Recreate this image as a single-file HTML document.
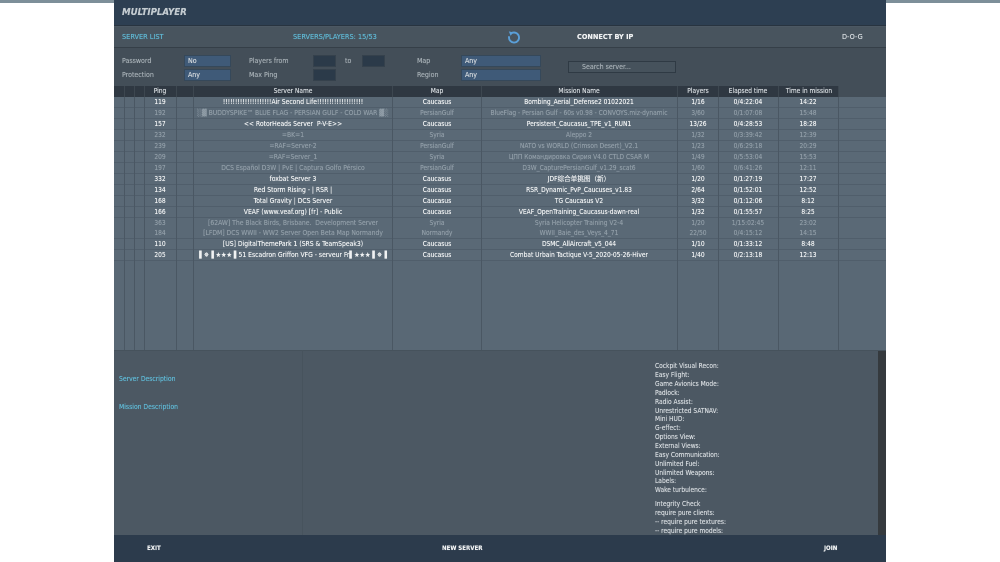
<!DOCTYPE html>
<html><head><meta charset="utf-8"><style>
html,body{margin:0;padding:0;width:1000px;height:562px;overflow:hidden;background:#fff}
body{font-family:"DejaVu Sans Condensed","DejaVu Sans","Noto Sans CJK SC",sans-serif;font-stretch:condensed;font-size:6.6px;color:#d0d6da;position:relative;filter:blur(.25px);text-shadow:0 0 .4px currentColor}
div{position:absolute;box-sizing:border-box;white-space:nowrap}
.c{transform:translateX(-50%)}
.cy{color:#5fb8d4}
.big{font-size:7.3px}
.desc{font-size:6.75px}
.lb{color:#a4adb3;font-size:7px}
.inp{background:#3f5a78;border:1px solid #35485a;height:12px;color:#d5dade;padding-left:3px;line-height:10px;font-size:7px}
.dk{background:#2b3a49;border:1px solid #35414c;height:12px;width:23px}
.r{left:114px;width:772px;height:11px;line-height:10px;border-bottom:1px solid #505e6b;background:#5a6976;color:#f0f2f3}
.r.o{color:#909da7}
.r div{top:0}
.r div:nth-child(2){font-size:6.75px}
.v{width:1px;background:#4a5763;top:97px;height:253px}
.hv{width:1px;background:#3d4750;top:86px;height:11px}
.h{top:86px;line-height:11px;color:#d5dade}
.t{left:655px;color:#d5dade;line-height:9px;margin-top:1px}
.b{font-weight:bold;color:#f0f2f3;line-height:10px}
</style></head><body>
<div style="left:0;top:0;width:1000px;height:3px;background:#7d8f99"></div>
<div style="left:114px;top:0;width:772px;height:562px;background:#4c5863"></div>
<div style="left:114px;top:0;width:772px;height:26px;background:#2d3f52;border-bottom:1px solid #283440"></div>
<div style="left:122px;top:7px;font-size:9.6px;font-weight:bold;font-style:italic;color:#c3cbd0;line-height:12px">MULTIPLAYER</div>
<div style="left:114px;top:27px;width:772px;height:21px;background:#48545e;border-bottom:1px solid #353f48"></div>
<div class="cy big" style="left:122px;top:32px;line-height:10px">SERVER LIST</div>
<div class="cy big" style="left:293px;top:32px;line-height:10px">SERVERS/PLAYERS: 15/53</div>
<svg style="position:absolute;left:507px;top:30px" width="14" height="14" viewBox="0 0 14 14"><path d="M4.2 3.4A5 5 0 1 1 2.2 6.2" fill="none" stroke="#5a9fd8" stroke-width="1.9"/><path d="M1.8 1.4L6.4 2.4 3.6 5.8Z" fill="#5a9fd8"/></svg>
<div class="b big" style="left:577px;top:32px">CONNECT BY IP</div>
<div class="big" style="left:842px;top:32px;line-height:10px;color:#d5dade">D-O-G</div>
<div style="left:114px;top:48px;width:772px;height:38px;background:#434e58"></div>
<div class="lb" style="left:122px;top:56px;line-height:10px">Password</div>
<div class="lb" style="left:122px;top:70px;line-height:10px">Protection</div>
<div class="inp" style="left:184px;top:55px;width:47px">No</div>
<div class="inp" style="left:184px;top:69px;width:47px">Any</div>
<div class="lb" style="left:249px;top:56px;line-height:10px">Players from</div>
<div class="lb" style="left:249px;top:70px;line-height:10px">Max Ping</div>
<div class="dk" style="left:313px;top:55px"></div>
<div class="lb" style="left:345px;top:56px;line-height:10px">to</div>
<div class="dk" style="left:362px;top:55px"></div>
<div class="dk" style="left:313px;top:69px"></div>
<div class="lb" style="left:417px;top:56px;line-height:10px">Map</div>
<div class="lb" style="left:417px;top:70px;line-height:10px">Region</div>
<div class="inp" style="left:461px;top:55px;width:80px">Any</div>
<div class="inp" style="left:461px;top:69px;width:80px">Any</div>
<div style="left:568px;top:61px;width:108px;height:12px;border:1px solid #2f3a44;background:#46525c;color:#a4adb3;line-height:10px;padding-left:13px;font-size:7px">Search server...</div>

<div style="left:114px;top:86px;width:725px;height:11px;background:#2f3842"></div>
<div style="left:839px;top:86px;width:47px;height:11px;background:#434e58"></div>
<div class="h c" style="left:160px">Ping</div>
<div class="h c" style="left:293px">Server Name</div>
<div class="h c" style="left:437px">Map</div>
<div class="h c" style="left:579px">Mission Name</div>
<div class="h c" style="left:698px">Players</div>
<div class="h c" style="left:748px">Elapsed time</div>
<div class="h c" style="left:809px">Time in mission</div>

<div class="r" style="top:97px"><div class="c" style="left:46px">119</div><div class="c" style="left:179px">!!!!!!!!!!!!!!!!!!!!Air Second Life!!!!!!!!!!!!!!!!!!!</div><div class="c" style="left:323px">Caucasus</div><div class="c" style="left:465px">Bombing_Aerial_Defense2 01022021</div><div class="c" style="left:584px">1/16</div><div class="c" style="left:634px">0/4:22:04</div><div class="c" style="left:694px">14:22</div></div>
<div class="r o" style="top:108px"><div class="c" style="left:46px">192</div><div class="c" style="left:179px">░▓ BUDDYSPIKE™ BLUE FLAG - PERSIAN GULF - COLD WAR ▓░</div><div class="c" style="left:323px">PersianGulf</div><div class="c" style="left:465px">BlueFlag - Persian Gulf - 60s v0.98 - CONVOYS.miz-dynamic</div><div class="c" style="left:584px">3/60</div><div class="c" style="left:634px">0/1:07:08</div><div class="c" style="left:694px">15:48</div></div>
<div class="r" style="top:119px"><div class="c" style="left:46px">157</div><div class="c" style="left:179px">&lt;&lt; RotorHeads Server&nbsp; P-V-E&gt;&gt;</div><div class="c" style="left:323px">Caucasus</div><div class="c" style="left:465px">Persistent_Caucasus_TPE_v1_RUN1</div><div class="c" style="left:584px">13/26</div><div class="c" style="left:634px">0/4:28:53</div><div class="c" style="left:694px">18:28</div></div>
<div class="r o" style="top:130px"><div class="c" style="left:46px">232</div><div class="c" style="left:179px">=BK=1</div><div class="c" style="left:323px">Syria</div><div class="c" style="left:465px">Aleppo 2</div><div class="c" style="left:584px">1/32</div><div class="c" style="left:634px">0/3:39:42</div><div class="c" style="left:694px">12:39</div></div>
<div class="r o" style="top:141px"><div class="c" style="left:46px">239</div><div class="c" style="left:179px">=RAF=Server-2</div><div class="c" style="left:323px">PersianGulf</div><div class="c" style="left:465px">NATO vs WORLD (Crimson Desert)_V2.1</div><div class="c" style="left:584px">1/23</div><div class="c" style="left:634px">0/6:29:18</div><div class="c" style="left:694px">20:29</div></div>
<div class="r o" style="top:152px"><div class="c" style="left:46px">209</div><div class="c" style="left:179px">=RAF=Server_1</div><div class="c" style="left:323px">Syria</div><div class="c" style="left:465px">ЦПП Командировка Сирия V4.0 CTLD CSAR M</div><div class="c" style="left:584px">1/49</div><div class="c" style="left:634px">0/5:53:04</div><div class="c" style="left:694px">15:53</div></div>
<div class="r o" style="top:163px"><div class="c" style="left:46px">197</div><div class="c" style="left:179px">DCS Español D3W | PvE | Captura Golfo Pérsico</div><div class="c" style="left:323px">PersianGulf</div><div class="c" style="left:465px">D3W_CapturePersianGulf_v1.29_scat6</div><div class="c" style="left:584px">1/60</div><div class="c" style="left:634px">0/6:41:26</div><div class="c" style="left:694px">12:11</div></div>
<div class="r" style="top:173.7px"><div class="c" style="left:46px">332</div><div class="c" style="left:179px">foxbat Server 3</div><div class="c" style="left:323px">Caucasus</div><div class="c" style="left:465px">JDF综合单挑图（新）</div><div class="c" style="left:584px">1/20</div><div class="c" style="left:634px">0/1:27:19</div><div class="c" style="left:694px">17:27</div></div>
<div class="r" style="top:184.6px"><div class="c" style="left:46px">134</div><div class="c" style="left:179px">Red Storm Rising - | RSR |</div><div class="c" style="left:323px">Caucasus</div><div class="c" style="left:465px">RSR_Dynamic_PvP_Caucuses_v1.83</div><div class="c" style="left:584px">2/64</div><div class="c" style="left:634px">0/1:52:01</div><div class="c" style="left:694px">12:52</div></div>
<div class="r" style="top:195.6px"><div class="c" style="left:46px">168</div><div class="c" style="left:179px">Total Gravity | DCS Server</div><div class="c" style="left:323px">Caucasus</div><div class="c" style="left:465px">TG Caucasus V2</div><div class="c" style="left:584px">3/32</div><div class="c" style="left:634px">0/1:12:06</div><div class="c" style="left:694px">8:12</div></div>
<div class="r" style="top:206.5px"><div class="c" style="left:46px">166</div><div class="c" style="left:179px">VEAF (www.veaf.org) [fr] - Public</div><div class="c" style="left:323px">Caucasus</div><div class="c" style="left:465px">VEAF_OpenTraining_Caucasus-dawn-real</div><div class="c" style="left:584px">1/32</div><div class="c" style="left:634px">0/1:55:57</div><div class="c" style="left:694px">8:25</div></div>
<div class="r o" style="top:217.5px"><div class="c" style="left:46px">363</div><div class="c" style="left:179px">[62AW] The Black Birds, Brisbane.&nbsp; Development Server</div><div class="c" style="left:323px">Syria</div><div class="c" style="left:465px">Syria Helicopter Training V2-4</div><div class="c" style="left:584px">1/20</div><div class="c" style="left:634px">1/15:02:45</div><div class="c" style="left:694px">23:02</div></div>
<div class="r o" style="top:228.4px"><div class="c" style="left:46px">184</div><div class="c" style="left:179px">[LFDM] DCS WWII - WW2 Server Open Beta Map Normandy</div><div class="c" style="left:323px">Normandy</div><div class="c" style="left:465px">WWII_Baie_des_Veys_4_71</div><div class="c" style="left:584px">22/50</div><div class="c" style="left:634px">0/4:15:12</div><div class="c" style="left:694px">14:15</div></div>
<div class="r" style="top:239.3px"><div class="c" style="left:46px">110</div><div class="c" style="left:179px">[US] DigitalThemePark 1 (SRS &amp; TeamSpeak3)</div><div class="c" style="left:323px">Caucasus</div><div class="c" style="left:465px">DSMC_AllAircraft_v5_044</div><div class="c" style="left:584px">1/10</div><div class="c" style="left:634px">0/1:33:12</div><div class="c" style="left:694px">8:48</div></div>
<div class="r" style="top:250.2px"><div class="c" style="left:46px">205</div><div class="c" style="left:179px">▌✵▐ ★★★ ▌51 Escadron Griffon VFG - serveur Fr▌★★★ ▌✵▐</div><div class="c" style="left:323px">Caucasus</div><div class="c" style="left:465px">Combat Urbain Tactique V-5_2020-05-26-Hiver</div><div class="c" style="left:584px">1/40</div><div class="c" style="left:634px">0/2:13:18</div><div class="c" style="left:694px">12:13</div></div>
<div style="left:114px;top:261px;width:772px;height:89px;background:#596875"></div>

<div class="v" style="left:124px"></div><div class="v" style="left:134px"></div><div class="v" style="left:144px"></div><div class="v" style="left:176px"></div><div class="v" style="left:193px"></div><div class="v" style="left:392px"></div><div class="v" style="left:481px"></div><div class="v" style="left:677px"></div><div class="v" style="left:718px"></div><div class="v" style="left:778px"></div><div class="v" style="left:838px"></div>
<div class="hv" style="left:124px"></div><div class="hv" style="left:134px"></div><div class="hv" style="left:144px"></div><div class="hv" style="left:176px"></div><div class="hv" style="left:193px"></div><div class="hv" style="left:392px"></div><div class="hv" style="left:481px"></div><div class="hv" style="left:677px"></div><div class="hv" style="left:718px"></div><div class="hv" style="left:778px"></div><div class="hv" style="left:838px"></div>

<div style="left:114px;top:350px;width:772px;height:185px;background:#4c5863;border-top:1px solid #46525c"></div>
<div style="left:302px;top:350px;width:1px;height:185px;background:#47535d"></div>
<div class="cy desc" style="left:119px;top:374px;line-height:10px">Server Description</div>
<div class="cy desc" style="left:119px;top:402px;line-height:10px">Mission Description</div>
<div class="t" style="top:361px">Cockpit Visual Recon:</div>
<div class="t" style="top:370px">Easy Flight:</div>
<div class="t" style="top:379px">Game Avionics Mode:</div>
<div class="t" style="top:387.7px">Padlock:</div>
<div class="t" style="top:396.5px">Radio Assist:</div>
<div class="t" style="top:405.5px">Unrestricted SATNAV:</div>
<div class="t" style="top:414.3px">Mini HUD:</div>
<div class="t" style="top:423px">G-effect:</div>
<div class="t" style="top:432px">Options View:</div>
<div class="t" style="top:441px">External Views:</div>
<div class="t" style="top:449.8px">Easy Communication:</div>
<div class="t" style="top:458.6px">Unlimited Fuel:</div>
<div class="t" style="top:467.5px">Unlimited Weapons:</div>
<div class="t" style="top:476.3px">Labels:</div>
<div class="t" style="top:485px">Wake turbulence:</div>
<div class="t" style="top:499px">Integrity Check</div>
<div class="t" style="top:507.5px">require pure clients:</div>
<div class="t" style="top:516.5px">-- require pure textures:</div>
<div class="t" style="top:525.5px">-- require pure models:</div>
<div style="left:878px;top:351px;width:8px;height:184px;background:#353a3e"></div>

<div style="left:114px;top:535px;width:772px;height:27px;background:#2c3b4c"></div>
<div class="b" style="left:147px;top:544px;font-size:6.1px">EXIT</div>
<div class="b" style="left:442px;top:544px;font-size:6.1px">NEW SERVER</div>
<div class="b" style="left:824px;top:544px;font-size:6.1px">JOIN</div>
</body></html>
